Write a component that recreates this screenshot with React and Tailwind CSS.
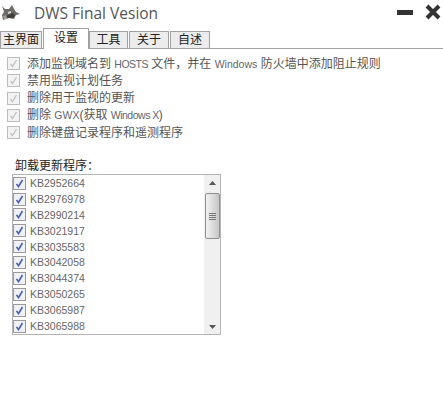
import React from 'react';

const uiFont = "font-['Liberation_Sans','Noto_Sans_CJK_SC',sans-serif]";

const tabs = [
  { label: '主界面', width: 'w-[42px]' },
  { label: '设置', width: 'w-[46px]', active: true },
  { label: '工具', width: 'w-[39px]' },
  { label: '关于', width: 'w-[40px]' },
  { label: '自述', width: 'w-[40px]' },
];

// latin runs are set smaller than the CJK text, like the tahoma fallback in the original
const Latin = ({ children, tight }) => (
  <span className={tight ? 'text-[10.5px] text-[#5f6670] tracking-[-0.5px]' : 'text-[10.5px] text-[#5f6670]'}>{children}</span>
);

const options = [
  <>添加监视域名到 <Latin tight>HOSTS</Latin> 文件，并在 <Latin>Windows</Latin> 防火墙中添加阻止规则</>,
  <>禁用监视计划任务</>,
  <>删除用于监视的更新</>,
  <>删除 <Latin>GWX</Latin>(获取 <Latin tight>Windows X</Latin>)</>,
  <>删除键盘记录程序和遥测程序</>,
];

const updates = [
  'KB2952664',
  'KB2976978',
  'KB2990214',
  'KB3021917',
  'KB3035583',
  'KB3042058',
  'KB3044374',
  'KB3050265',
  'KB3065987',
  'KB3065988',
];

const Logo = () => (
  <svg width="20" height="18" viewBox="0 0 20 18" className="mt-[4px] ml-[1px]">
    <path d="M1 2 L4 5 L8 5 L11 1 L13 5 L15 8 L19 10 L15 11 L13 15 L8 14 L2 16 L1 11 L3 8 Z" fill="#6d6b68" />
    <path d="M5 12 L12 9 L14 11 L12 14 L7 14 Z" fill="#3f3e3d" />
    <path d="M7 8 L10 7 L10 9 L7 10 Z" fill="#d8d6d0" />
    <path d="M2 12 L5 11 L6 15 L3 15 Z" fill="#a09e94" />
  </svg>
);

const DisabledCheck = () => (
  <span className="w-[13px] h-[13px] shrink-0 border border-[#bcbcbc] bg-[#f3f3f3] flex items-center justify-center">
    <svg width="9" height="9" viewBox="0 0 9 9">
      <path d="M1.5 5 L3.5 7.5 L7.5 1" fill="none" stroke="#c4c4c4" strokeWidth="1.4" />
    </svg>
  </span>
);

const ListCheck = () => (
  <span className="w-[13px] h-[13px] shrink-0 border border-[#9a9a9a] bg-[#eef0f6] flex items-center justify-center">
    <svg width="9" height="9" viewBox="0 0 9 9">
      <path d="M1.5 5 L3.5 7.5 L7.5 1" fill="none" stroke="#4a5fb0" strokeWidth="1.6" />
    </svg>
  </span>
);

const Scrollbar = () => (
  <div className="w-4 bg-[#f0f0f0] flex flex-col items-center">
    <svg width="7" height="4" viewBox="0 0 7 4" className="mt-[6px] mb-[8px]">
      <path d="M3.5 0 L7 4 L0 4 Z" fill="#555" />
    </svg>
    <div className="w-[15px] h-[46px] rounded-[2px] border border-[#8f8f8f] bg-gradient-to-r from-[#f2f2f2] to-[#c6c6c6] flex flex-col items-center justify-center gap-[1px]">
      <span className="w-[7px] h-[1px] bg-[#777]" />
      <span className="w-[7px] h-[1px] bg-[#777]" />
      <span className="w-[7px] h-[1px] bg-[#777]" />
      <span className="w-[7px] h-[1px] bg-[#777]" />
    </div>
    <svg width="7" height="4" viewBox="0 0 7 4" className="mt-auto mb-[5px]">
      <path d="M0 0 L7 0 L3.5 4 Z" fill="#555" />
    </svg>
  </div>
);

export default function App() {
  return (
    <div className={`w-[443px] h-[411px] bg-white overflow-hidden ${uiFont}`}>
      <div className="h-[28px] flex items-start">
        <Logo />
        <span className="ml-[13px] mt-[2px] text-[15.5px] leading-[22px] text-[#555] font-['Open_Sans',sans-serif]">DWS Final Vesion</span>
        <div className="ml-auto mr-[2px] mt-[4px] flex items-center gap-[12px]">
          <span className="w-4 h-[5px] bg-[#333]" />
          <svg width="16" height="16" viewBox="0 0 16 16">
            <path d="M2 2 L14 14 M14 2 L2 14" stroke="#333" strokeWidth="4" />
          </svg>
        </div>
      </div>

      <div className="h-[21px] flex items-end border-b border-[#a0a0a0]">
        {tabs.map((tab) => (
          <div
            key={tab.label}
            className={
              tab.active
                ? `${tab.width} h-[21px] -mb-[1px] border border-b-0 border-[#a0a0a0] bg-white text-center text-[12px] leading-[18px] text-[#222]`
                : `${tab.width} h-[17px] mr-[1px] border border-b-0 border-[#a0a0a0] bg-[#ececec] text-center text-[12px] leading-[17px] text-[#222]`
            }
          >
            {tab.label}
          </div>
        ))}
      </div>

      <div className="mt-[6px] pl-[7px] flex flex-col">
        {options.map((opt, i) => (
          <div key={i} className="h-[17.25px] flex items-center gap-[7px]">
            <DisabledCheck />
            <span className="text-[12px] leading-none text-[#555] whitespace-pre">{opt}</span>
          </div>
        ))}
      </div>

      <div className="mt-[17px] pl-[15px] text-[12px] leading-[16px] text-[#222]">卸载更新程序：</div>

      <div className="ml-3 w-[209px] h-[161px] border border-[#b4b4b4] flex">
        <div className="flex-1 flex flex-col">
          {updates.map((kb) => (
            <div key={kb} className="h-[15.9px] flex items-center gap-[4px]">
              <ListCheck />
              <span className="text-[10.5px] leading-none text-[#666]">{kb}</span>
            </div>
          ))}
        </div>
        <Scrollbar />
      </div>
    </div>
  );
}
